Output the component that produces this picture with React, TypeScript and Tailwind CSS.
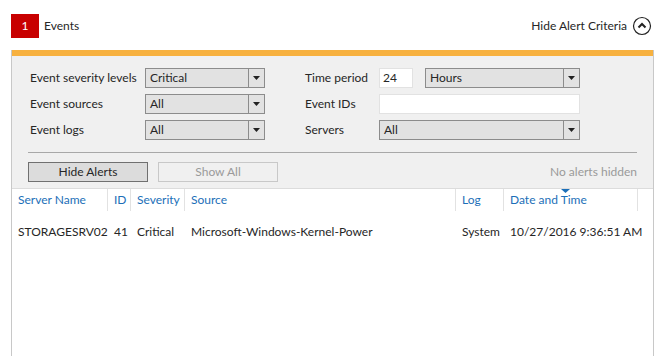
import { ReactNode } from 'react';

const font = { fontFamily: '"Segoe UI", Lato, "Liberation Sans", sans-serif' };

function Select({ value, width }: { value: string; width: string }) {
  return (
    <div className={`flex h-[20px] items-stretch border border-[#8c8c8c] bg-[#e2e2e2] ${width}`}>
      <div className="flex flex-1 items-center pl-[4px] text-[12px] text-[#262626]">{value}</div>
      <div className="flex w-[16px] items-center justify-center border-l border-[#8c8c8c]">
        <svg width="7" height="4" viewBox="0 0 7 4">
          <path d="M0 0h7L3.5 4z" fill="#222" />
        </svg>
      </div>
    </div>
  );
}

function Field({ label, labelWidth, children }: { label: string; labelWidth: string; children: ReactNode }) {
  return (
    <div className="flex h-[20px] items-center">
      <div className={`text-[12px] text-[#262626] ${labelWidth}`}>{label}</div>
      {children}
    </div>
  );
}

function HeaderCell({ label, width, sorted }: { label: string; width: string; sorted?: boolean }) {
  return (
    <div className={`relative flex h-[22px] items-center border-r border-[#e2e2e2] pl-[6px] text-[12px] text-[#1c6fb8] ${width}`}>
      {sorted && (
        <svg className="absolute left-[57px] top-[0px]" width="9" height="4" viewBox="0 0 9 4">
          <path d="M0 0h9L4.5 4z" fill="#1c6fb8" />
        </svg>
      )}
      {label}
    </div>
  );
}

function Cell({ children, width }: { children: ReactNode; width: string }) {
  return <div className={`pl-[6px] text-[12px] text-[#262626] ${width}`}>{children}</div>;
}

export default function App() {
  return (
    <div className="flex h-[356px] w-[655px] flex-col bg-white" style={font}>
      {/* Header */}
      <div className="flex h-[50px] items-center pl-[11px] pr-[3px] pt-[1px]">
        <div className="flex h-[24px] w-[28px] items-center justify-center bg-[#c80000] text-[12px] text-white">1</div>
        <div className="ml-[5px] text-[12px] text-[#262626]">Events</div>
        <div className="ml-auto flex items-center gap-[5px]">
          <span className="text-[12px] text-[#262626]">Hide Alert Criteria</span>
          <svg width="20" height="20" viewBox="0 0 20 20">
            <circle cx="10" cy="10" r="8.5" fill="none" stroke="#222" strokeWidth="1.2" />
            <path d="M6.5 11.5L10 8l3.5 3.5" fill="none" stroke="#222" strokeWidth="2" />
          </svg>
        </div>
      </div>

      <div className="ml-[11px] mr-[1px] flex flex-1 flex-col border-x border-[#c8c8c8]">
        {/* Criteria panel */}
        <div className="border-t-[6px] border-[#f7b13f] bg-[#f0f0f0] px-[16px] pb-[6px] pt-[12px]">
          <div className="flex pl-[2px]">
            <div className="flex flex-col gap-[6px]">
              <Field label="Event severity levels" labelWidth="w-[115px]">
                <Select value="Critical" width="w-[120px]" />
              </Field>
              <Field label="Event sources" labelWidth="w-[115px]">
                <Select value="All" width="w-[120px]" />
              </Field>
              <Field label="Event logs" labelWidth="w-[115px]">
                <Select value="All" width="w-[120px]" />
              </Field>
            </div>
            <div className="ml-[40px] flex flex-col gap-[6px]">
              <Field label="Time period" labelWidth="w-[74px]">
                <div className="flex h-[20px] w-[34px] items-center border border-[#e2e2e2] bg-white pl-[3px] text-[12px] text-[#262626]">24</div>
                <div className="ml-[12px]">
                  <Select value="Hours" width="w-[155px]" />
                </div>
              </Field>
              <Field label="Event IDs" labelWidth="w-[74px]">
                <div className="h-[20px] w-[201px] border border-[#e2e2e2] bg-white" />
              </Field>
              <Field label="Servers" labelWidth="w-[74px]">
                <Select value="All" width="w-[201px]" />
              </Field>
            </div>
          </div>
          <div className="mt-[12px] border-t border-[#a8a8a8]" />
          <div className="mt-[9px] flex items-center">
            <button className="h-[20px] w-[120px] border border-[#707070] bg-[#dcdcdc] text-[12px] text-[#262626]">Hide Alerts</button>
            <button className="ml-[10px] h-[20px] w-[120px] border border-[#c8c8c8] bg-[#f0f0f0] text-[12px] text-[#9a9a9a]">Show All</button>
            <span className="ml-auto text-[12px] text-[#9a9a9a]">No alerts hidden</span>
          </div>
        </div>

        {/* Table */}
        <div className="flex border-t border-[#dcdcdc]">
          <HeaderCell label="Server Name" width="w-[96px]" />
          <HeaderCell label="ID" width="w-[23px]" />
          <HeaderCell label="Severity" width="w-[54px]" />
          <HeaderCell label="Source" width="w-[271px]" />
          <HeaderCell label="Log" width="w-[48px]" />
          <HeaderCell label="Date and Time" width="w-[134px]" sorted />
        </div>
        <div className="mt-[12px] flex items-center">
          <Cell width="w-[96px]">STORAGESRV02</Cell>
          <Cell width="w-[23px]">41</Cell>
          <Cell width="w-[54px]">Critical</Cell>
          <Cell width="w-[271px]">Microsoft-Windows-Kernel-Power</Cell>
          <Cell width="w-[48px]">System</Cell>
          <Cell width="w-[140px]">10/27/2016 9:36:51 AM</Cell>
        </div>
      </div>
    </div>
  );
}
